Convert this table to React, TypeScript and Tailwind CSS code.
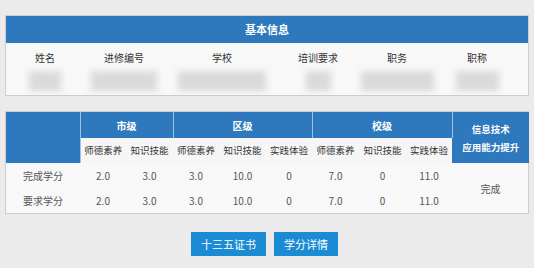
import React from "react";

const font = { fontFamily: '"Noto Sans CJK SC", "Noto Sans", sans-serif' };

const infoCols = [
  { label: "姓名", w: "w-[78px]", blur: "w-[32px]" },
  { label: "进修编号", w: "w-[80px]", blur: "w-[66px]" },
  { label: "学校", w: "w-[116px]", blur: "w-[88px]" },
  { label: "培训要求", w: "w-[76px]", blur: "w-[25px]" },
  { label: "职务", w: "w-[82px]", blur: "w-[73px]" },
  { label: "职称", w: "w-[78px]", blur: "w-[43px]" },
];

const subHeads = ["师德素养", "知识技能", "师德素养", "知识技能", "实践体验", "师德素养", "知识技能", "实践体验"];

const rows = [
  { name: "完成学分", vals: ["2.0", "3.0", "3.0", "10.0", "0", "7.0", "0", "11.0"] },
  { name: "要求学分", vals: ["2.0", "3.0", "3.0", "10.0", "0", "7.0", "0", "11.0"] },
];

const App: React.FC = () => {
  return (
    <div style={font} className="w-[534px] h-[268px] bg-[#ebebeb] pt-[15px] px-[5px] overflow-hidden">
      {/* 基本信息 */}
      <div className="border border-[#cdcdcd] bg-[#f8f8f8] h-[81px]">
        <div className="h-[27px] bg-[#2e79be] flex items-center justify-center text-white text-[11px] font-bold">
          基本信息
        </div>
        <div className="flex">
          {infoCols.map((c) => (
            <div key={c.label} className={`${c.w} flex flex-col items-center`}>
              <div className="h-[28px] flex items-center text-[10px] text-[#333]">{c.label}</div>
              <div className={`${c.blur} h-[20px] bg-[#dadada] blur-[3px]`} />
            </div>
          ))}
        </div>
      </div>

      {/* 学分 */}
      <div className="mt-[15px] border border-[#cdcdcd] bg-[#f8f8f8]">
        <table className="w-full table-fixed border-collapse text-[10px] text-center">
          <colgroup>
            <col className="w-[74px]" />
            <col className="w-[46px]" />
            <col className="w-[47px]" />
            <col className="w-[46px]" />
            <col className="w-[47px]" />
            <col className="w-[46px]" />
            <col className="w-[47px]" />
            <col className="w-[47px]" />
            <col className="w-[46px]" />
            <col className="w-[77px]" />
          </colgroup>
          <thead>
            <tr className="h-[26px]">
              <th rowSpan={2} className="bg-[#2e79be] border-r border-[#9cc3e6]" />
              <th colSpan={2} className="bg-[#2e79be] text-white font-bold border-r border-[#9cc3e6]">市级</th>
              <th colSpan={3} className="bg-[#2e79be] text-white font-bold border-r border-[#9cc3e6]">区级</th>
              <th colSpan={3} className="bg-[#2e79be] text-white font-bold border-r border-[#9cc3e6]">校级</th>
              <th rowSpan={2} className="bg-[#2e79be] text-white font-bold text-[9.5px] leading-[18px]">
                信息技术
                <br />
                应用能力提升
              </th>
            </tr>
            <tr className="h-[25px]">
              {subHeads.map((s, i) => (
                <th key={i} className="font-normal text-[9.5px] text-[#333] bg-[#f6f6f6]">{s}</th>
              ))}
            </tr>
          </thead>
          <tbody className="text-[#555]">
            {rows.map((r, ri) => (
              <tr key={r.name} className="h-[25px]">
                <td>{r.name}</td>
                {r.vals.map((v, i) => (
                  <td key={i}>{v}</td>
                ))}
                {ri === 0 && <td rowSpan={2}>完成</td>}
              </tr>
            ))}
          </tbody>
        </table>
      </div>

      {/* 按钮 */}
      <div className="mt-[18px] flex justify-center gap-2 pr-[5px]">
        <button className="w-[75px] h-[24px] bg-[#1b8cd3] text-white text-[11px]">十三五证书</button>
        <button className="w-[64px] h-[24px] bg-[#1b8cd3] text-white text-[11px]">学分详情</button>
      </div>
    </div>
  );
};

export default App;
